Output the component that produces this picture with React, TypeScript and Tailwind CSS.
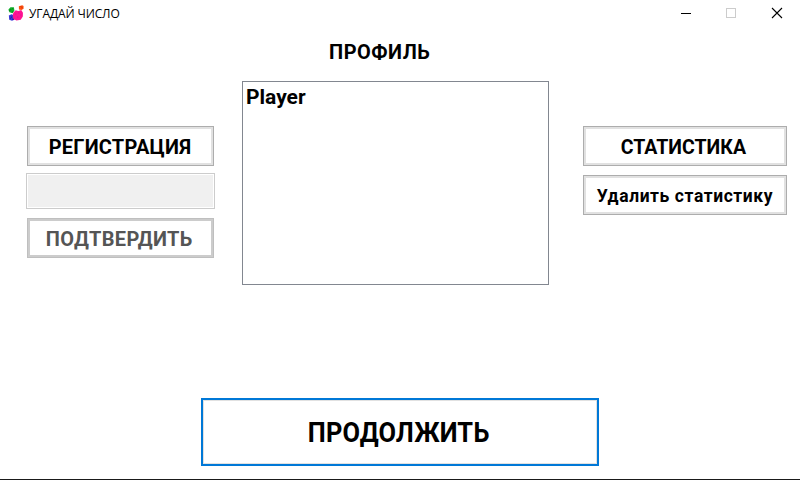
import React from "react";

const display = "font-['Roboto','Liberation_Sans',sans-serif] font-bold whitespace-nowrap";

function Logo() {
  return (
    <svg className="w-4 h-4 shrink-0" viewBox="0.2 0 15.2 15.2">
      <path d="m10.5 1.2 3.2-1 1.3.8v2.6l-2 1.2-2.4-.6z" fill="#ff5010" />
      <path d="m.6 4.2 2-2.1h3.2l.5 3.4-1.7 2.3-3-.9z" fill="#0fb02c" />
      <path d="m1 10 2.5-1.2 3 1.2-.2 4L4 15l-2.6-1z" fill="#3a36d8" />
      <path d="m5.2 7.4 2.3-2.4 2.5.6 2.8-.9L14.4 7.4l-.1 3.6-2 2.9-4 .8-3-1.5-.6-3z" fill="#ff1493" />
      <path d="M2 4h1.5v1H2zM4 3h1v1H4zM4 6h1v1H4zM1 5h1v1H1z" fill="#087010" opacity=".7" />
      <path d="M3 11h1v1H3zM4 13h2v1H4zM2 12h1v1H2z" fill="#17177a" opacity=".6" />
      <path d="M7 8h1v1H7zM10 7h1v1h-1zM9 11h1v1H9zM12 9h1v1h-1z" fill="#c800a0" opacity=".6" />
      <path d="M13 2h1v1h-1zM12 1h1v1h-1z" fill="#b82800" opacity=".6" />
    </svg>
  );
}

function TitleBar() {
  return (
    <header className="flex h-[26px] items-center pl-2">
      <Logo />
      <span className="ml-[5px] mt-px grow whitespace-nowrap font-['Open_Sans','Noto_Sans',sans-serif] text-[12px] leading-4 tracking-[-0.12px]">
        УГАДАЙ ЧИСЛО
      </span>
      <svg className="h-[26px] w-[138px]" viewBox="0 0 138 26" shapeRendering="crispEdges" fill="none">
        <path d="M19 13.5h10" stroke="#000" />
        <rect x="64.5" y="8.5" width="9" height="9" stroke="#ccc" />
        <path d="m110 8 10 10m0-10-10 10" stroke="#000" shapeRendering="auto" strokeWidth="1.1" />
      </svg>
    </header>
  );
}

function Button({ box, text, children }: { box: string; text: string; children: string }) {
  return (
    <button className={`flex items-center justify-center border bg-white pt-0.5 ${box}`}>
      <span className={`${display} ${text}`}>{children}</span>
    </button>
  );
}

const normal = "border-[#adadad] shadow-[inset_0_0_0_2px_#e1e1e1]";

export default function App() {
  return (
    <div className="flex h-[480px] w-[800px] flex-col border-b border-[#1a1a1a] bg-white text-black">
      <TitleBar />
      <main className="flex grow flex-col">
        <div className="flex h-[372px] items-start pl-[26px]">
          <section className="flex w-[189px] flex-col items-center pt-[100px]">
            <Button box={`h-10 w-[187px] pr-0.5 ${normal}`} text="scale-x-95 text-[21px] leading-6 tracking-[0.25px]">РЕГИСТРАЦИЯ</Button>
            <input disabled className="mt-[7px] h-9 w-[189px] border border-[#ccc] bg-[#f0f0f0] shadow-[inset_0_0_0_1px_#fff]" />
            <Button box="mt-[9px] h-10 w-[187px] pr-0.5 border-[#bfbfbf] shadow-[inset_0_0_0_2px_#ccc]" text="scale-x-95 text-[21px] leading-6 tracking-[0.37px] text-[#555]">ПОДТВЕРДИТЬ</Button>
          </section>
          <section className="ml-[27px] flex w-[307px] flex-col pt-[14px]">
            <h1 className={`${display} ml-[87px] origin-left scale-x-95 self-start text-[21px] leading-6 tracking-[0.55px]`}>ПРОФИЛЬ</h1>
            <ul className="mt-[17px] h-[204px] border border-[#828790] pl-[3px] pt-[3px]">
              <li className={`${display} w-fit text-[21px] leading-6`}>Player</li>
            </ul>
          </section>
          <section className="ml-[34px] flex w-[204px] flex-col gap-[9px] pt-[100px]">
            <Button box={`h-10 pr-[3px] ${normal}`} text="scale-x-93 text-[21px] leading-6">СТАТИСТИКА</Button>
            <Button box={`h-10 pr-px ${normal}`} text="scale-x-97 text-[18px] leading-6 tracking-[0.6px]">Удалить статистику</Button>
          </section>
        </div>
        <button className="ml-[201px] flex h-[68px] w-[398px] items-center justify-center border-2 border-[#0078d7] pr-0.5 pt-0.5 shadow-[inset_0_0_0_1px_#e1e1e1]">
          <span className={`${display} scale-x-94 text-[27px] leading-8 tracking-[0.2px]`}>ПРОДОЛЖИТЬ</span>
        </button>
      </main>
    </div>
  );
}
